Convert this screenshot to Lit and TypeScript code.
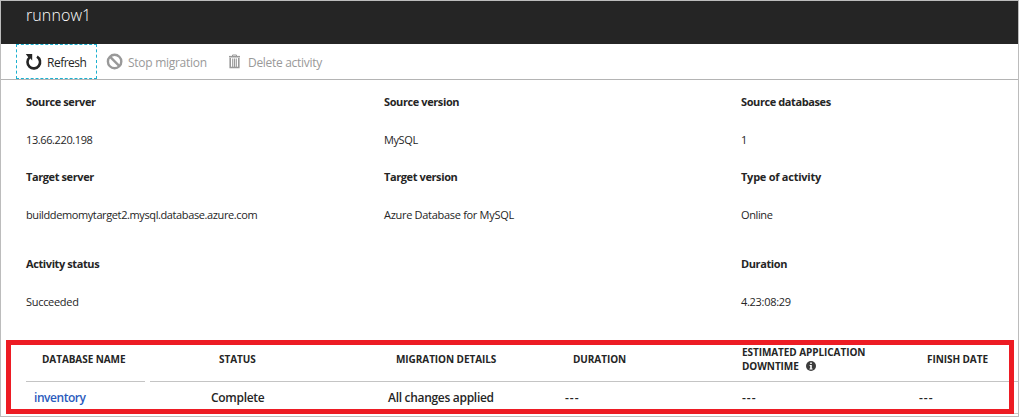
import { LitElement, html, css } from "lit";
import { customElement } from "lit/decorators.js";

@customElement("app-root")
export class AppRoot extends LitElement {
  static styles = css`
    :host { display: block; font-family: "Open Sans", "Noto Sans", sans-serif; color: #252525; }
    * { box-sizing: border-box; }
    .blade { position: relative; width: 1019px; height: 417px; border: 1px solid #bcbcbc; background: #fff; overflow: hidden; display: flex; flex-direction: column; }
    .title { flex: none; height: 43px; background: #252525; color: #fff; padding: 2px 0 0 25px; font-size: 16px; line-height: 24px; font-weight: 300; }
    .title span { letter-spacing: 0.1px; }
    .bar { flex: none; height: 36px; border-bottom: 1px solid #b4b4b4; display: flex; padding-left: 15px; font-size: 12px; line-height: 16px; color: #999; }
    .cmd { display: flex; align-items: center; white-space: nowrap; height: 35px; }
    .cmd.focus { width: 81px; color: #252525; padding-left: 9px; outline: 1px dashed #1cb0cf; outline-offset: -1px; }
    .cmd svg { flex: none; }
    .refresh { letter-spacing: -0.5px; margin-left: 5px; }
    .stop { margin-left: 9px; width: 122px; }
    .stop span { margin-left: 5px; letter-spacing: -0.28px; }
    .delete span { margin-left: 7px; letter-spacing: -0.3px; }
    .cmd span { padding-top: 2px; }
    .facts { flex: none; display: grid; grid-template-columns: 358px 357px 1fr; grid-template-rows: 75px 87px 90px; padding: 14px 0 0 25px; font-size: 11px; line-height: 16px; }
    dl { margin: 0; }
    dt { font-weight: 700; letter-spacing: -0.4px; white-space: nowrap; }
    dt.loose { letter-spacing: -0.25px; }
    dd { margin: 22px 0 0; letter-spacing: -0.39px; white-space: nowrap; }
    dd.loose { letter-spacing: -0.3px; }
    .grid { flex: none; margin-left: 25px; margin-top: -10px; }
    .row { display: grid; grid-template-columns: repeat(5, 177px) 1fr; }
    .head { height: 45px; padding-top: 1px; align-items: center; font-size: 10px; font-weight: 700; line-height: 14px; white-space: nowrap; }
    .head > div { padding-left: 16px; letter-spacing: -0.07px; }
    .head > .tight { padding-left: 8px; }
    .rules { display: flex; gap: 5px; height: 1px; }
    .rules i { background: #c4c4c4; width: 119px; }
    .rules i + i { flex: 1; }
    .body { height: 32px; padding-top: 1px; border-bottom: 1px solid #c8c8c8; align-items: center; font-size: 12px; font-weight: 600; line-height: 16px; white-space: nowrap; }
    .body > div { padding-left: 8px; letter-spacing: -0.3px; }
    .body > .link { color: #2b5bbd; letter-spacing: -0.45px; }
    .body > .none { letter-spacing: 1px; }
    .info { vertical-align: -1px; margin-left: 5px; }
    .callout { position: absolute; left: 5px; top: 339px; width: 1008px; height: 74px; border: 5px solid #ed1c24; }
  `;

  private facts = [
    ["Source server", "13.66.220.198"],
    ["Source version", "MySQL"],
    ["Source databases", "1"],
    ["Target server", "builddemomytarget2.mysql.database.azure.com"],
    ["Target version", "Azure Database for MySQL", "", "loose"],
    ["Type of activity", "Online", "loose"],
    ["Activity status", "Succeeded", "", "loose"],
    null,
    ["Duration", "4.23:08:29", "", "loose"],
  ];

  render() {
    return html`
      <div class="blade">
        <div class="title"><span>runnow1</span></div>
        <div class="bar">
          <div class="cmd focus">
            <svg width="17" height="17" viewBox="0 0 17 17"><path d="M4.6 4.4A6.3 6.3 0 1 0 12 3.7" fill="none" stroke="#252525" stroke-width="2.6"/><path d="M0.8 1H7.2V7.4L5.4 5.6L3.4 4.4Z" fill="#252525"/></svg>
            <span class="refresh">Refresh</span>
          </div>
          <div class="cmd stop">
            <svg width="17" height="17" viewBox="0 0 17 17"><g fill="none" stroke="#999" stroke-width="2.4"><circle cx="8.6" cy="8.5" r="6.7"/><path d="M4.2 3.9L13.4 13.1"/></g></svg>
            <span>Stop migration</span>
          </div>
          <div class="cmd delete">
            <svg width="13" height="15" viewBox="0 0 13 15"><g fill="none" stroke="#999"><path d="M1 2.7H12" stroke-width="1.6"/><path d="M4.5 2V1H8.5V2"/><path d="M2.2 4V13.5H10.8V4" stroke-width="1.6"/><path d="M4.7 4.5V13M6.5 4.5V13M8.3 4.5V13" stroke-width="1.1"/></g></svg>
            <span>Delete activity</span>
          </div>
        </div>
        <div class="facts">
          ${this.facts.map((f) => f ? html`<dl><dt class=${f[2] ?? ""}>${f[0]}</dt><dd class=${f[3] ?? ""}>${f[1]}</dd></dl>` : html`<div></div>`)}
        </div>
        <div class="grid">
          <div class="row head">
            <div>DATABASE NAME</div><div>STATUS</div><div>MIGRATION DETAILS</div><div>DURATION</div>
            <div class="tight">ESTIMATED APPLICATION<br />DOWNTIME
              <svg class="info" width="10" height="10" viewBox="0 0 10 10"><circle cx="5" cy="5" r="5" fill="#3c3c3c"/><path d="M4.2 1.5H5.8V3H4.2ZM3.6 4H5.8V7.4H6.5V8.4H3.5V7.4H4.2V5H3.6Z" fill="#fff"/></svg>
            </div>
            <div>FINISH DATE</div>
          </div>
          <div class="rules"><i></i><i></i></div>
          <div class="row body">
            <div class="link">inventory</div><div>Complete</div><div>All changes applied</div><div class="none">---</div><div class="none">---</div><div class="none">---</div>
          </div>
        </div>
        <div class="callout"></div>
      </div>
    `;
  }
}
